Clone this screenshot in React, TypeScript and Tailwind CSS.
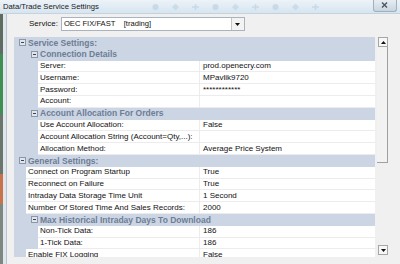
import React from 'react';

type Row =
  | { kind: 'cat'; level: 0 | 1; label: string }
  | { kind: 'prop'; level: 1 | 2; label: string; value?: string };

const rows: Row[] = [
  { kind: 'cat', level: 0, label: 'Service Settings:' },
  { kind: 'cat', level: 1, label: 'Connection Details' },
  { kind: 'prop', level: 2, label: 'Server:', value: 'prod.openecry.com' },
  { kind: 'prop', level: 2, label: 'Username:', value: 'MPavlik9720' },
  { kind: 'prop', level: 2, label: 'Password:', value: '************' },
  { kind: 'prop', level: 2, label: 'Account:' },
  { kind: 'cat', level: 1, label: 'Account Allocation For Orders' },
  { kind: 'prop', level: 2, label: 'Use Account Allocation:', value: 'False' },
  { kind: 'prop', level: 2, label: 'Account Allocation String (Account=Qty,...):' },
  { kind: 'prop', level: 2, label: 'Allocation Method:', value: 'Average Price System' },
  { kind: 'cat', level: 0, label: 'General Settings:' },
  { kind: 'prop', level: 1, label: 'Connect on Program Startup', value: 'True' },
  { kind: 'prop', level: 1, label: 'Reconnect on Failure', value: 'True' },
  { kind: 'prop', level: 1, label: 'Intraday Data Storage Time Unit', value: '1 Second' },
  { kind: 'prop', level: 1, label: 'Number Of Stored Time And Sales Records:', value: '2000' },
  { kind: 'cat', level: 1, label: 'Max Historical Intraday Days To Download' },
  { kind: 'prop', level: 2, label: 'Non-Tick Data:', value: '186' },
  { kind: 'prop', level: 2, label: '1-Tick Data:', value: '186' },
  { kind: 'prop', level: 1, label: 'Enable FIX Logging', value: 'False' },
];

// small boxed minus, the tree collapse glyph
const Collapse = () => (
  <div className="w-[7px] h-[7px] border border-[#8c96a4] bg-[#dfe5ee] flex items-center justify-center shrink-0">
    <div className="w-[3px] h-px bg-[#3c4450]" />
  </div>
);

const GridRow = ({ row }: { row: Row }) => {
  if (row.kind === 'cat') {
    return (
      <div
        className={
          'h-[11.8px] shrink-0 flex items-center bg-[#cbd5e4] whitespace-nowrap gap-[2px] ' +
          (row.level === 0 ? 'pl-[5px]' : 'pl-[17px]')
        }
      >
        <Collapse />
        <span className="text-[8.5px] font-bold text-[#6e7d94] leading-none">{row.label}</span>
      </div>
    );
  }
  return (
    <div className="h-[11.8px] shrink-0 flex whitespace-nowrap">
      {/* name column always ends at the splitter */}
      <div className="w-[186px] shrink-0 flex">
        <div className={'bg-[#cbd5e4] shrink-0 ' + (row.level === 1 ? 'w-[12px]' : 'w-[24px]')} />
        <div className="flex-1 min-w-0 bg-white border-b border-r border-[#ececec] flex items-center pl-[2px] overflow-hidden">
          <span className="text-[8px] leading-none text-[#111]">{row.label}</span>
        </div>
      </div>
      <div className="flex-1 min-w-0 bg-white border-b border-[#ececec] flex items-center pl-[3px]">
        <span className="text-[8px] leading-none text-[#111]">{row.value ?? ''}</span>
      </div>
    </div>
  );
};

const Arrow = ({ up }: { up?: boolean }) => (
  <div className="w-[10px] h-[10px] shrink-0 border border-[#a6a6a6] bg-[#f7f7f7] flex items-center justify-center">
    <svg width="5" height="3" viewBox="0 0 5 3">
      <path d={up ? 'M0 3 L2.5 0 L5 3 Z' : 'M0 0 L2.5 3 L5 0 Z'} fill="#111" />
    </svg>
  </div>
);

const App = () => {
  return (
    <div
      className="w-[400px] h-[264px] overflow-hidden flex flex-col bg-[#f0f0f0]"
      style={{ fontFamily: '"Liberation Sans", Arial, sans-serif' }}
    >
      {/* title bar */}
      <div className="h-[14px] shrink-0 flex items-center justify-between bg-gradient-to-b from-[#edf3f8] to-[#d6e5f0] border-b border-[#c4d3df]">
        <span className="pl-[3px] text-[7.7px] text-[#1b1b1b] leading-none whitespace-nowrap">
          Data/Trade Service Settings
        </span>
        <div className="flex items-center gap-[11px] opacity-30">
          {[0, 1, 2, 3, 4, 5, 6, 7, 8].map((i) => (
            <svg key={i} width="9" height="8" viewBox="0 0 9 8">
              {i % 3 === 0 ? (
                <circle cx="4.5" cy="4" r="3" fill="#8fb3cf" />
              ) : i % 3 === 1 ? (
                <path d="M4.5 0.5 L8 4 L4.5 7.5 L1 4 Z" fill="#9dbcd5" />
              ) : (
                <path d="M1 4 H8 M4.5 1 V7" stroke="#8fb3cf" strokeWidth="1.5" />
              )}
            </svg>
          ))}
        </div>
        <div className="w-[24px] h-[12px] mr-[3px] mb-[2px] rounded-b-[3px] bg-gradient-to-b from-[#e7edf2] to-[#c9d5df] border border-t-0 border-[#9fb0bf] flex items-center justify-center">
          <svg width="7" height="6" viewBox="0 0 7 6">
            <path d="M1 0.5 L6 5.5 M6 0.5 L1 5.5" stroke="#4a5563" strokeWidth="1.4" />
          </svg>
        </div>
      </div>

      <div className="flex-1 flex">
        {/* edge of the window behind */}
        <div className="w-[7px] flex">
          <div className="w-[3px] flex flex-col">
            <div className="h-[40px] bg-[#5f6c62]" />
            <div className="h-[60px] bg-[#3f8f52]" />
            <div className="h-[60px] bg-[#6a756c]" />
            <div className="h-[30px] bg-[#c8744a]" />
            <div className="flex-1 bg-[#7d8680]" />
          </div>
          <div className="w-[4px] bg-[#dfe6ec] border-r border-[#b8c4ce]" />
        </div>

        <div className="flex-1 flex flex-col">
          {/* service selector */}
          <div className="pt-[3px] pl-[22px] flex items-center gap-[3px]">
            <span className="text-[8px] text-[#111] leading-none">Service:</span>
            <div className="w-[184px] h-[14px] bg-white border border-[#a9b3bd] flex items-center justify-between">
              <span className="pl-[2px] text-[7.6px] text-[#111] leading-none whitespace-pre">
                OEC FIX/FAST    [trading]
              </span>
              <div className="w-[13px] h-[12px] border-l border-[#c6c6c6] bg-[#f3f3f3] flex items-center justify-center">
                <svg width="5" height="3" viewBox="0 0 5 3">
                  <path d="M0 0 L2.5 3 L5 0 Z" fill="#111" />
                </svg>
              </div>
            </div>
          </div>

          {/* property grid */}
          <div className="mt-[6px] ml-[7px] flex">
            <div className="w-[361px] h-[220px] overflow-hidden flex flex-col">
              {rows.map((r, i) => (
                <GridRow key={i} row={r} />
              ))}
            </div>
            <div className="w-[14px] h-[218px] flex flex-col items-end pr-px">
              <Arrow up />
              <div className="w-[11px] h-[116px] shrink-0 border-r border-b border-[#a0a0a0] bg-[#f2f2f2]" />
              <div className="flex-1" />
              <Arrow />
            </div>
          </div>
        </div>
      </div>
    </div>
  );
};

export default App;
